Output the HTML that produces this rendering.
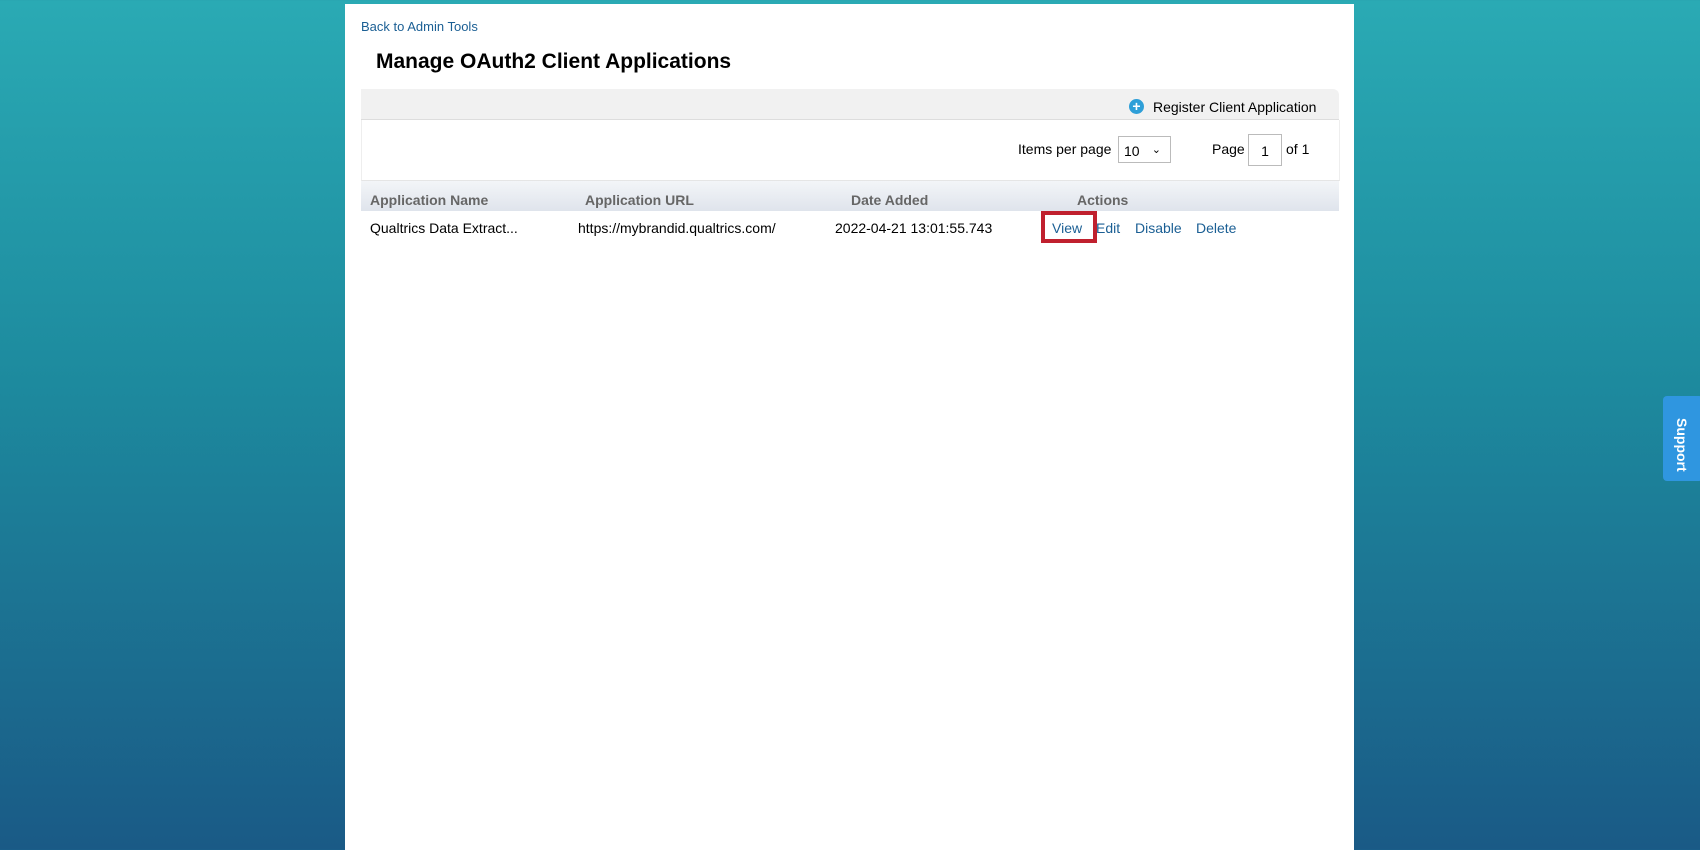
<!DOCTYPE html>
<html><head><style>
body{margin:0;width:1700px;height:850px;overflow:hidden;background:linear-gradient(#2aaab4,#1d8a9e 45%,#1a5a86);font-family:"Liberation Sans",sans-serif;position:relative}
.panel{position:absolute;left:345px;top:4px;width:1009px;height:846px;background:#fff}
.a{color:#1b5f94}
.t{position:absolute;font-size:14px;white-space:nowrap}
</style></head><body>
<div class="panel"></div>
<div class="t a" style="left:361px;top:19px;font-size:13px">Back to Admin Tools</div>
<div class="t" style="left:376px;top:50px;font-size:21px;font-weight:bold;color:#000">Manage OAuth2 Client Applications</div>
<div style="position:absolute;left:361px;top:89px;width:978px;height:30px;background:#f1f1f1;border-bottom:1px solid #ddd;border-radius:0 6px 0 0"></div>
<div style="position:absolute;left:1129px;top:99px;width:15px;height:15px;border-radius:50%;background:#2e9fd8;color:#fff;font-size:14px;font-weight:bold;line-height:15px;text-align:center">+</div>
<div class="t" style="left:1153px;top:99px">Register Client Application</div>
<div style="position:absolute;left:361px;top:120px;width:977px;height:60px;border-left:1px solid #eee;border-right:1px solid #eee;border-bottom:1px solid #e5e5e5"></div>
<div class="t" style="left:1018px;top:141px">Items per page</div>
<div style="position:absolute;left:1118px;top:136px;width:53px;height:27px;border:1px solid #bbb;font-size:14px;line-height:28px;box-sizing:border-box;padding-left:5px">10 <span style="position:absolute;right:9px;top:-1px;font-size:11px">&#8964;</span></div>
<div class="t" style="left:1212px;top:141px">Page</div>
<div style="position:absolute;left:1248px;top:134px;width:34px;height:32px;border:1px solid #bbb;box-sizing:border-box;font-size:14px;text-align:center;line-height:32px">1</div>
<div class="t" style="left:1286px;top:141px">of 1</div>
<div style="position:absolute;left:361px;top:181px;width:978px;height:30px;background:linear-gradient(#f3f5f8,#dfe4ec)"></div>
<div class="t" style="left:370px;top:192px;font-weight:bold;color:#666">Application Name</div>
<div class="t" style="left:585px;top:192px;font-weight:bold;color:#666">Application URL</div>
<div class="t" style="left:851px;top:192px;font-weight:bold;color:#666">Date Added</div>
<div class="t" style="left:1077px;top:192px;font-weight:bold;color:#666">Actions</div>
<div class="t" style="left:370px;top:220px">Qualtrics Data Extract...</div>
<div class="t" style="left:578px;top:220px">https://mybrandid.qualtrics.com/</div>
<div class="t" style="left:835px;top:220px">2022-04-21 13:01:55.743</div>
<div style="position:absolute;left:1041px;top:211px;width:56px;height:32px;border:4px solid #c0202e;box-sizing:border-box"></div>
<div class="t a" style="left:1052px;top:220px">View</div>
<div class="t a" style="left:1096px;top:220px">Edit</div>
<div class="t a" style="left:1135px;top:220px">Disable</div>
<div class="t a" style="left:1196px;top:220px">Delete</div>
<div style="position:absolute;left:1663px;top:396px;width:40px;height:85px;background:#2f96e0;border-radius:4px"></div>
<div style="position:absolute;left:1662px;top:430px;width:40px;color:#fff;font-weight:bold;font-size:14px;transform:rotate(90deg);text-align:center">Support</div>
</body></html>
